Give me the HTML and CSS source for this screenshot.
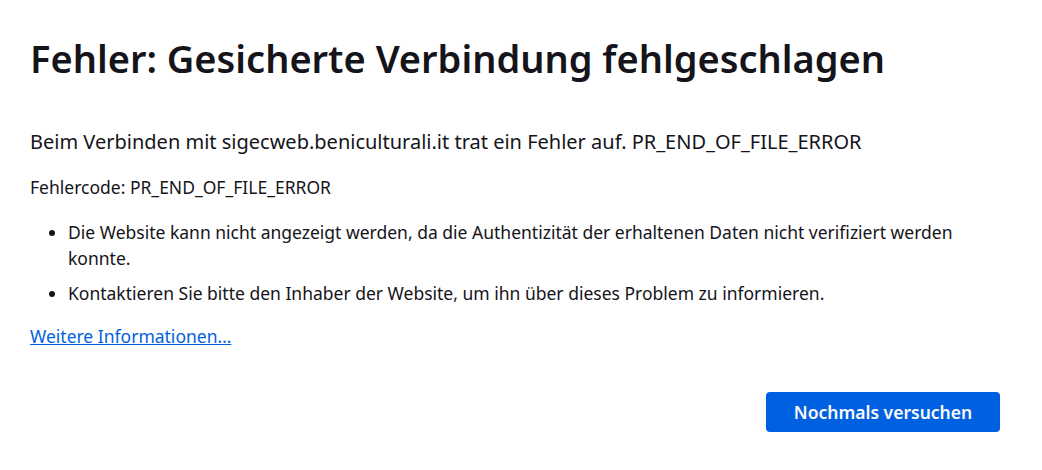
FILE: index.html
```html
<!DOCTYPE html>
<html lang="de">
<head>
<meta charset="utf-8">
<title>Fehler: Gesicherte Verbindung fehlgeschlagen</title>
<link rel="stylesheet" href="styles.css">
</head>
<body>
<main class="container">
  <h1 class="title">Fehler: Gesicherte Verbindung fehlgeschlagen</h1>
  <p class="short-desc">Beim Verbinden mit sigecweb.beniculturali.it trat ein Fehler auf. PR_END_OF_FILE_ERROR</p>
  <p class="code">Fehlercode: PR_END_OF_FILE_ERROR</p>
  <ul class="details">
    <li>Die Website kann nicht angezeigt werden, da die Authentizität der erhaltenen Daten nicht verifiziert werden konnte.</li>
    <li>Kontaktieren Sie bitte den Inhaber der Website, um ihn über dieses Problem zu informieren.</li>
  </ul>
  <p class="more"><a href="#" class="link">Weitere Informationen…</a></p>
  <div class="actions">
    <button class="primary" type="button">Nochmals versuchen</button>
  </div>
</main>
</body>
</html>
```
FILE: styles.css
```css
html, body {
  margin: 0;
  padding: 0;
  background: #ffffff;
}
body {
  font-family: "Noto Sans", "Open Sans", sans-serif;
  color: #15141a;
  font-size: 17.5px;
}
.container {
  width: 970px;
  padding: 30px 0 0 30px;
  box-sizing: content-box;
}
.title {
  margin: 0;
  font-size: 38px;
  font-weight: 600;
  line-height: 56px;
}
.short-desc {
  margin: 42px 0 0;
  font-size: 20px;
  line-height: 28px;
}
.code {
  margin: 18px 0 0;
  font-size: 17.5px;
  line-height: 26px;
}
.details {
  margin: 19px 0 0;
  padding-left: 38px;
  font-size: 17.5px;
  line-height: 26px;
}
.details li + li {
  margin-top: 9px;
}
.more {
  margin: 17px 0 0;
  font-size: 17.5px;
  line-height: 26px;
}
.link {
  color: #0061e0;
  text-decoration: underline;
}
.actions {
  display: flex;
  justify-content: flex-end;
  margin-top: 43px;
}
.primary {
  font-family: inherit;
  background: #0061e0;
  color: #fbfbfe;
  border: none;
  border-radius: 4px;
  height: 40px;
  width: 234px;
  padding: 0;
  font-size: 17.5px;
  font-weight: 600;
}
```
